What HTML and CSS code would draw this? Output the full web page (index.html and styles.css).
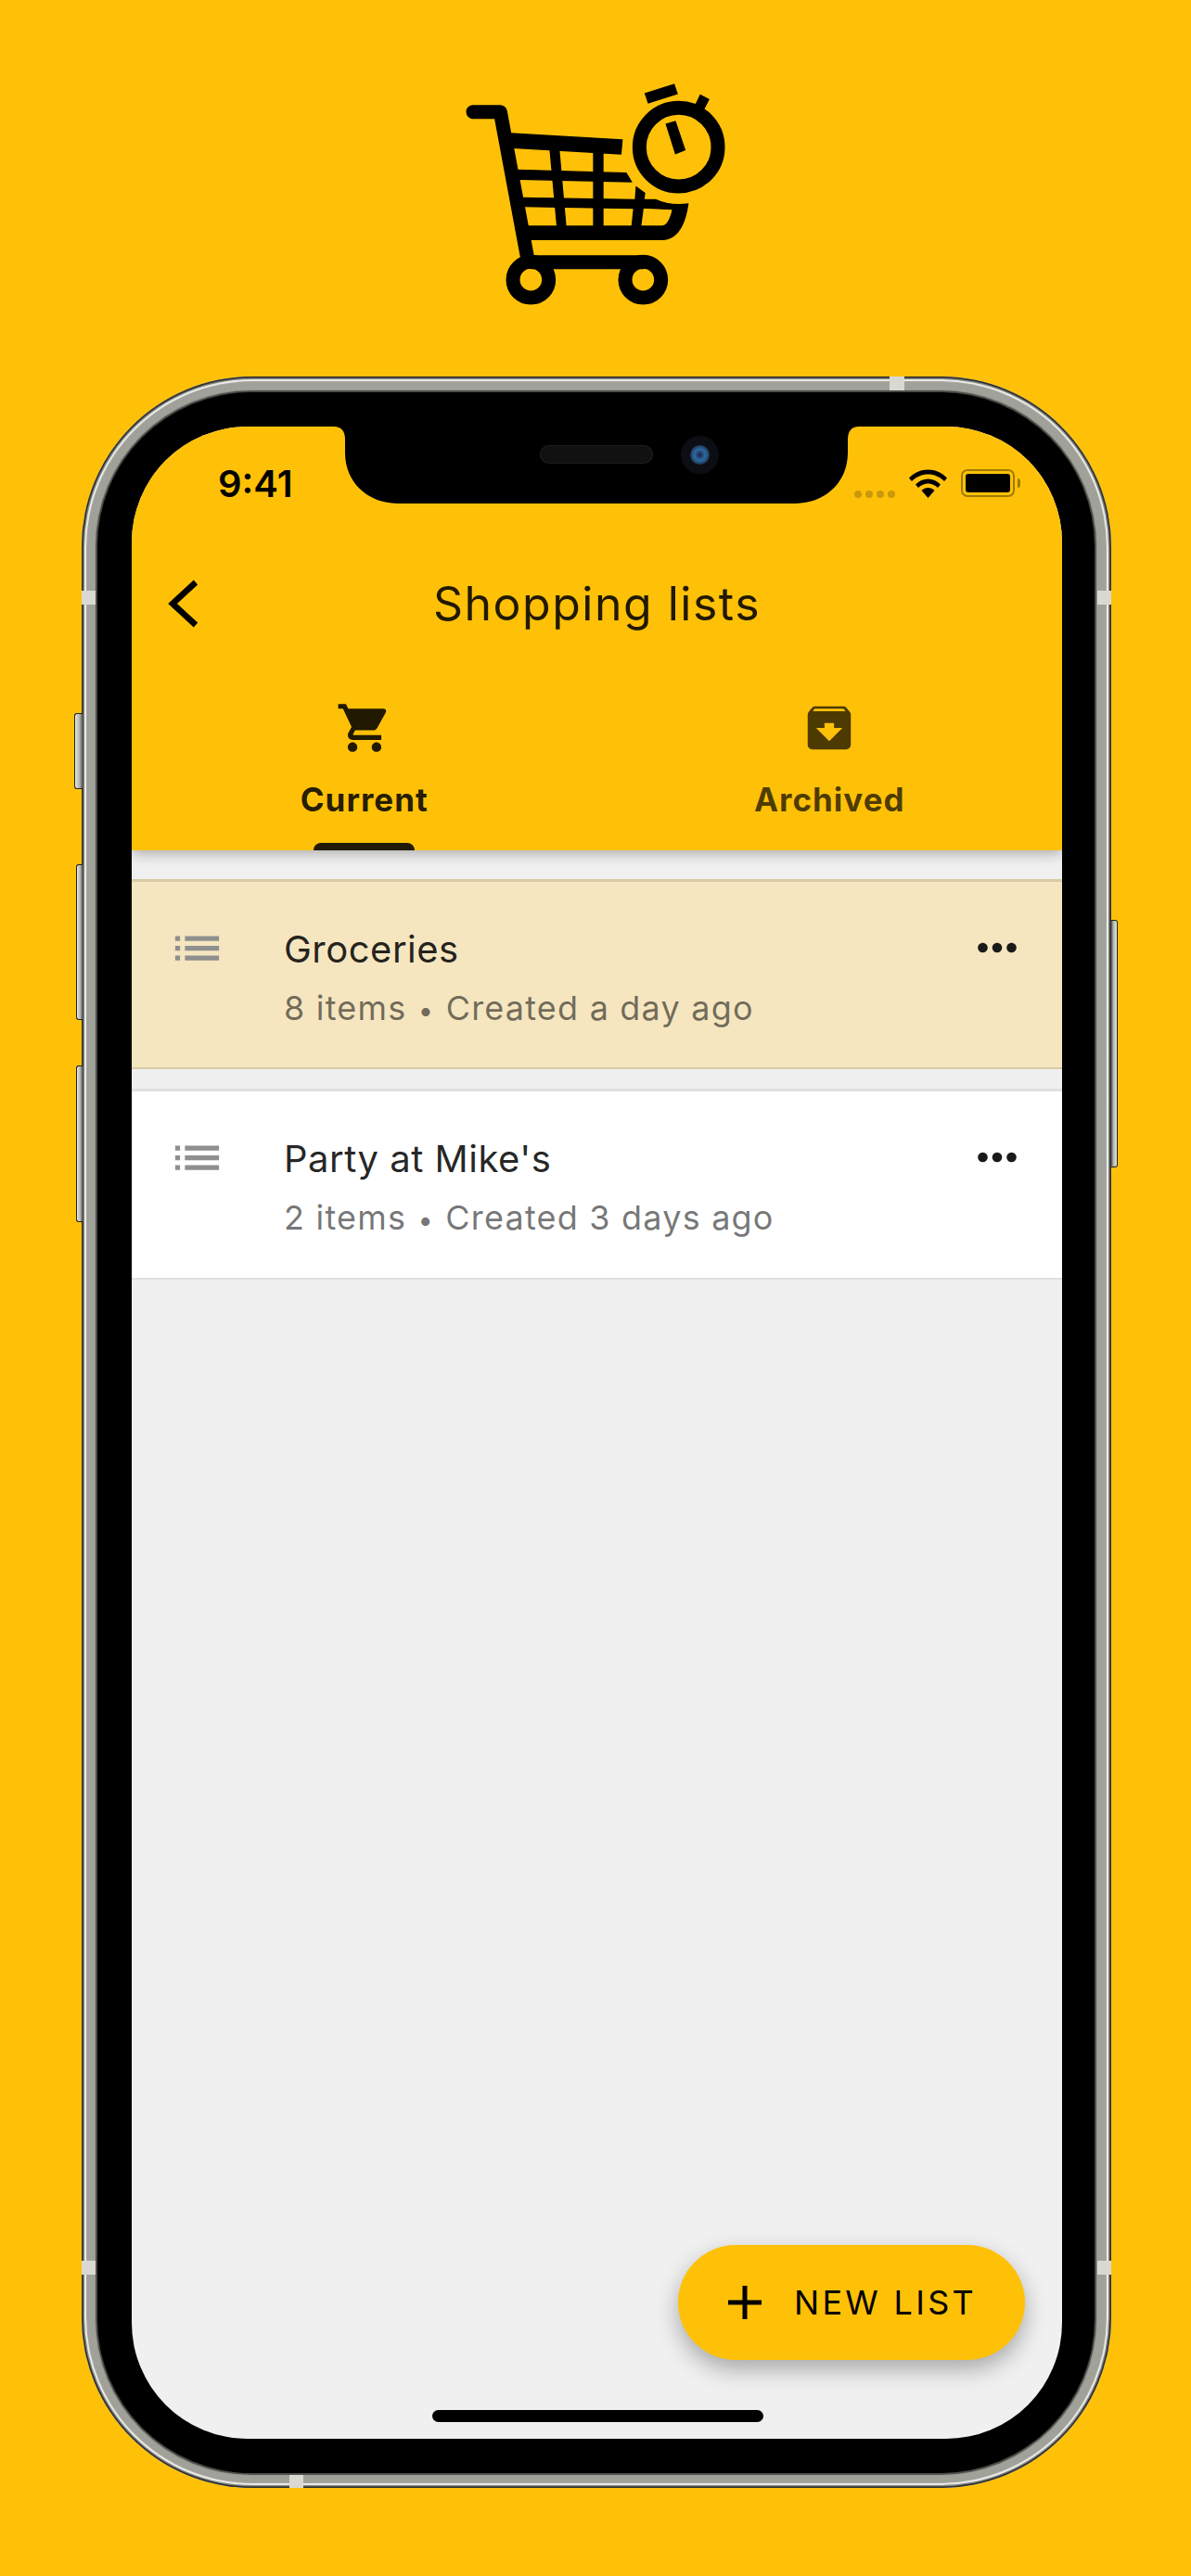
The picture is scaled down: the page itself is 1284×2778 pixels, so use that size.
FILE: index.html
```html
<!DOCTYPE html>
<html>
<head>
  <meta charset="UTF-8">
  <title>Shopping lists</title>
  <link rel="stylesheet" href="styles.css">
</head>
<body>
  <div class="logo">
    <svg width="404" height="280" viewBox="0 0 1212 840">
      <path class="logo-line" d="M210 152H298L385 620"/>
      <path d="M332 222L692 243L688 288L340 268Z"/>
      <path d="M355 340L705 350L722 378L362 370Z"/>
      <path d="M370 430L735 436L738 395L765 415L762 436L800 436C830 450 870 455 905 450C895 520 870 565 820 565L388 565L380 522L820 522C838 522 850 495 856 467L760 462L752 522L724 522L730 464L375 458Z"/>
      <path d="M459 272L488 274L510 522L482 522Z"/>
      <path d="M600 280H630V522H600Z"/>
      <path class="logo-line" d="M400 638H760"/>
      <circle class="logo-ring" cx="397" cy="695" r="58"/>
      <circle class="logo-ring" cx="760" cy="695" r="58"/>
      <circle class="logo-ring" cx="875" cy="266" r="127"/>
      <path d="M835 192L864 183L895 275L865 287Z"/>
      <path d="M767 93L860 63L870 93L777 123Z"/>
      <path d="M945 98L972 112L955 145L930 130Z"/>
    </svg>
  </div>

  <div class="phone">
    <div class="side-btn btn-mute"></div>
    <div class="side-btn btn-up"></div>
    <div class="side-btn btn-down"></div>
    <div class="side-btn btn-power"></div>
    <div class="band band-left-top"></div>
    <div class="band band-left-bottom"></div>
    <div class="band band-right-top"></div>
    <div class="band band-right-bottom"></div>
    <div class="band band-top"></div>
    <div class="band band-bottom"></div>

    <div class="bezel">
      <div class="screen">
        <svg class="notch" width="566" height="83" viewBox="0 0 566 83">
          <path d="M0 0H566C558 0 554 5 554 14V28C554 60 530 83 496 83H70C36 83 12 60 12 28V14C12 5 8 0 0 0Z"/>
        </svg>
        <div class="speaker"></div>
        <div class="camera"><div class="lens"></div></div>

        <header class="appbar">
          <div class="status">
            <span class="time">9:41</span>
            <div class="status-icons">
              <div class="signal"><i></i><i></i><i></i><i></i></div>
              <svg class="wifi" width="41" height="31" viewBox="0 0 41 31">
                <path d="M0 9.5C11 -2.5 30 -2.5 41 9.5L38 13C28.500 3 12.500 3 3 13Z"/>
                <path d="M7 16.500C14.500 8.500 26.500 8.500 34 16.500L31 20C25 14 16 14 10 20Z"/>
                <path d="M13.500 23C17.500 19 23.500 19 27.500 23L20.500 31Z"/>
              </svg>
              <div class="battery"><div class="battery-fill"></div></div>
              <div class="battery-nub"></div>
            </div>
          </div>

          <div class="toolbar">
            <svg class="back" width="34" height="54" viewBox="0 0 34 54">
              <path d="M31 4L6 27L31 50"/>
            </svg>
            <h1>Shopping lists</h1>
          </div>

          <nav class="tabs">
            <div class="tab active">
              <svg width="62" height="62" viewBox="0 0 24 24">
                <path d="M7 18c-1.100 0-1.990.9-1.990 2S5.900 22 7 22s2-.9 2-2-.9-2-2-2zM1 2v2h2l3.600 7.590-1.350 2.450c-.16.28-.25.61-.25.96 0 1.100.9 2 2 2h12v-2H7.420c-.14 0-.25-.11-.25-.25l.03-.12.9-1.630h7.450c.75 0 1.410-.41 1.750-1.030l3.580-6.490c.08-.14.12-.31.12-.48 0-.55-.45-1-1-1H5.210l-.94-2H1zm16 16c-1.100 0-1.990.9-1.990 2s.89 2 1.990 2 2-.9 2-2-.9-2-2-2z"/>
              </svg>
              <span>Current</span>
              <div class="indicator"></div>
            </div>
            <div class="tab">
              <svg width="62" height="62" viewBox="0 0 24 24">
                <path d="M20.540 5.230l-1.390-1.680C18.880 3.210 18.470 3 18 3H6c-.47 0-.88.21-1.160.55L3.460 5.230C3.170 5.570 3 6.020 3 6.500V19c0 1.100.9 2 2 2h14c1.100 0 2-.9 2-2V6.500c0-.48-.17-.93-.46-1.270zM12 17.500L6.500 12H10v-2h4v2h3.500L12 17.500zM5.120 5l.81-1h12l.94 1H5.120z"/>
              </svg>
              <span>Archived</span>
            </div>
          </nav>
        </header>

        <main class="lists">
          <div class="row selected">
            <svg class="row-icon" width="63" height="63" viewBox="0 0 24 24">
              <path d="M3 13h2v-2H3v2zm0 4h2v-2H3v2zm0-8h2V7H3v2zm4 4h14v-2H7v2zm0 4h14v-2H7v2zM7 7v2h14V7H7z"/>
            </svg>
            <div class="row-text">
              <div class="row-title">Groceries</div>
              <div class="row-sub">8 items <span class="sep">•</span> Created a day ago</div>
            </div>
            <svg class="row-more" width="42" height="12" viewBox="0 0 42 12">
              <circle cx="5.500" cy="6" r="5.300"/><circle cx="21" cy="6" r="5.300"/><circle cx="36.500" cy="6" r="5.300"/>
            </svg>
          </div>
          <div class="row">
            <svg class="row-icon" width="63" height="63" viewBox="0 0 24 24">
              <path d="M3 13h2v-2H3v2zm0 4h2v-2H3v2zm0-8h2V7H3v2zm4 4h14v-2H7v2zm0 4h14v-2H7v2zM7 7v2h14V7H7z"/>
            </svg>
            <div class="row-text">
              <div class="row-title">Party at Mike's</div>
              <div class="row-sub">2 items <span class="sep">•</span> Created 3 days ago</div>
            </div>
            <svg class="row-more" width="42" height="12" viewBox="0 0 42 12">
              <circle cx="5.500" cy="6" r="5.300"/><circle cx="21" cy="6" r="5.300"/><circle cx="36.500" cy="6" r="5.300"/>
            </svg>
          </div>
        </main>

        <button class="fab">
          <svg width="36" height="36" viewBox="0 0 36 36">
            <path d="M15.500 0H20.500V15.500H36V20.500H20.500V36H15.500V20.500H0V15.500H15.500Z"/>
          </svg>
          <span>NEW LIST</span>
        </button>
        <div class="home-bar"></div>
      </div>
    </div>
  </div>
</body>
</html>
```

FILE: styles.css
```css
html, body {
  margin: 0;
  height: 2778px;
  overflow: hidden;
  background: #ffc107;
  font-family: Inter, "Noto Sans", sans-serif;
}

.logo {
  display: flex;
  justify-content: flex-start;
  padding: 70px 0 0 440px;
  height: 280px;
}
.logo svg {
  display: block;
}
.logo path {
  stroke: #000;
  stroke-width: 4;
}
.logo-line {
  fill: none;
  stroke-width: 45 !important;
  stroke-linecap: round;
  stroke-linejoin: round;
}
.logo-ring {
  fill: none;
  stroke: #000;
  stroke-width: 45;
}

/* phone frame */
.phone {
  position: relative;
  box-sizing: border-box;
  width: 1110px;
  height: 2277px;
  margin: 56px 0 0 88px;
  padding: 17px 18px 16px 17px;
  border-radius: 184px;
  background: #a0a199;
  box-shadow:
    inset 0 0 0 1.500px #2f2f2a,
    inset 0 0 1px 3px #777,
    inset 0 0 1px 5px #f4f4f0,
    inset 0 0 1px 7px #a0a199;
}
.bezel {
  box-sizing: border-box;
  height: 100%;
  padding: 37px 35px 37px 37px;
  border-radius: 166px;
  background: #000;
  box-shadow: 0 0 1px 2px #4a4a46;
}
.screen {
  position: relative;
  display: flex;
  flex-direction: column;
  height: 100%;
  overflow: hidden;
  border-radius: 125px;
  background: #f0f0f0;
}

.side-btn {
  position: absolute;
  box-sizing: border-box;
  left: -6px;
  width: 7px;
  border: 1.500px solid #222;
  border-right: 0;
  border-radius: 3px 0 0 3px;
  background: linear-gradient(90deg, #e8e8e4, #b4b4ae 60%, #555);
}
.btn-mute { top: 363px; height: 82px; left: -8px; width: 9px; }
.btn-up { top: 526px; height: 168px; }
.btn-down { top: 743px; height: 169px; }
.btn-power {
  top: 586px;
  left: auto;
  right: -7px;
  height: 267px;
  border: 1.500px solid #222;
  border-left: 0;
  border-radius: 0 3px 3px 0;
  background: linear-gradient(270deg, #e8e8e4, #b4b4ae 60%, #555);
}

.band {
  position: absolute;
  background: #d9d9d2;
}
.band-left-top, .band-left-bottom, .band-right-top, .band-right-bottom {
  width: 15px;
  height: 15px;
}
.band-left-top { left: 0; top: 231px; }
.band-left-bottom { left: 0; top: 2032px; }
.band-right-top { right: 0; top: 231px; }
.band-right-bottom { right: 0; top: 2032px; }
.band-top { left: 871px; top: 0; width: 16px; height: 15px; }
.band-bottom { left: 224px; bottom: 0; width: 15px; height: 14px; }

/* notch */
.notch {
  position: absolute;
  z-index: 3;
  left: 218px;
  top: 0;
}
.speaker {
  position: absolute;
  z-index: 4;
  left: 440px;
  top: 20px;
  width: 122px;
  height: 20px;
  border-radius: 10px;
  background: #111;
  box-shadow: inset 0 0 0 1px #1e1e1e;
}
.camera {
  position: absolute;
  z-index: 4;
  left: 592px;
  top: 10px;
  display: flex;
  align-items: center;
  justify-content: center;
  width: 41px;
  height: 41px;
  border-radius: 50%;
  background: #0c0e13;
}
.lens {
  width: 21px;
  height: 21px;
  border-radius: 50%;
  background: radial-gradient(circle, #20204a 0, #2d6aa0 40%, #1b3550 72%, #0b1520 100%);
}

/* app bar */
.appbar {
  position: relative;
  z-index: 2;
  height: 457px;
  background: #ffc107;
  color: rgba(0, 0, 0, .87);
  box-shadow: 0 3px 14px rgba(0, 0, 0, .3);
}
.status {
  box-sizing: border-box;
  display: flex;
  justify-content: space-between;
  height: 118px;
  padding: 46px 45px 0 93px;
}
.time {
  font-weight: 600;
  font-size: 40px;
  line-height: 32px;
  color: #000;
}
.status-icons {
  display: flex;
  align-items: flex-start;
}
.signal {
  display: flex;
  gap: 4px;
  margin: 23px 15px 0 0;
}
.signal i {
  width: 8px;
  height: 8px;
  border-radius: 50%;
  background: #c9980b;
}
.wifi {
  fill: #000;
  margin-right: 15px;
}
.battery {
  box-sizing: border-box;
  width: 58px;
  height: 30px;
  padding: 3px;
  border: 2px solid #a17a05;
  border-radius: 7px;
}
.battery-fill {
  height: 100%;
  border-radius: 3px;
  background: #000;
}
.battery-nub {
  width: 3px;
  height: 10px;
  margin: 10px 0 0 3px;
  border-radius: 0 3px 3px 0;
  background: #a17a05;
}

.toolbar {
  position: relative;
  height: 146px;
  display: flex;
  align-items: center;
  justify-content: center;
}
.back {
  position: absolute;
  left: 38px;
  top: 46px;
  fill: none;
  stroke: #000;
  stroke-width: 6.500;
}
.toolbar h1 {
  margin: 0;
  font-weight: 400;
  font-size: 50px;
  letter-spacing: 1.500px;
}

.tabs {
  display: flex;
  height: 193px;
}
.tab {
  position: relative;
  flex: 1;
  display: flex;
  flex-direction: column;
  align-items: center;
  padding-top: 30px;
  font-weight: 700;
  font-size: 35px;
  letter-spacing: 1px;
  color: rgba(0, 0, 0, .7);
  fill: rgba(0, 0, 0, .7);
}
.tab svg {
  display: block;
}
.tab span {
  margin-top: 25px;
}
.tab.active {
  color: rgba(0, 0, 0, .87);
  fill: rgba(0, 0, 0, .87);
}
.indicator {
  position: absolute;
  bottom: 0;
  width: 109px;
  height: 8px;
  border-radius: 8px 8px 0 0;
  background: #211a04;
}

/* lists */
.lists {
  display: flex;
  flex-direction: column;
  gap: 21px;
  padding-top: 31px;
}
.row {
  box-sizing: border-box;
  display: flex;
  align-items: flex-start;
  height: 206px;
  padding-top: 40px;
  background: #fff;
  border-top: 3px solid #e0e0e0;
  border-bottom: 2px solid #e0e0e0;
}
.row.selected {
  height: 205px;
  background: #f5e6c0;
  border-color: #d8cca8;
}
.row-icon {
  flex: none;
  margin: 0 62px 0 39px;
  fill: #8f8f8f;
}
.row-text {
  flex: 1;
  margin-top: 7px;
}
.row-title {
  font-size: 40px;
  line-height: 52px;
  letter-spacing: .5px;
  color: rgba(0, 0, 0, .87);
}
.row-sub {
  margin-top: 14px;
  font-size: 36px;
  line-height: 46px;
  letter-spacing: 1.200px;
  color: rgba(0, 0, 0, .55);
}
.sep {
  margin: 0 1px;
  font-size: 29px;
}
.row-more {
  flex: none;
  margin: 25px 49px 0 0;
  fill: #1a1a1a;
}

.fab {
  position: absolute;
  z-index: 3;
  left: 589px;
  top: 1961px;
  display: flex;
  align-items: center;
  gap: 35px;
  box-sizing: border-box;
  width: 374px;
  height: 124px;
  padding: 0 0 0 54px;
  border: 0;
  border-radius: 62px;
  background: #ffc107;
  box-shadow: 0 10px 24px rgba(0, 0, 0, .3);
  font-family: Inter, sans-serif;
  font-weight: 400;
  font-size: 36px;
  letter-spacing: 3.300px;
  color: #000;
}
.fab svg {
  display: block;
  fill: #000;
}
.home-bar {
  position: absolute;
  z-index: 3;
  left: 324px;
  top: 2139px;
  width: 357px;
  height: 13px;
  border-radius: 7px;
  background: #000;
}
```
